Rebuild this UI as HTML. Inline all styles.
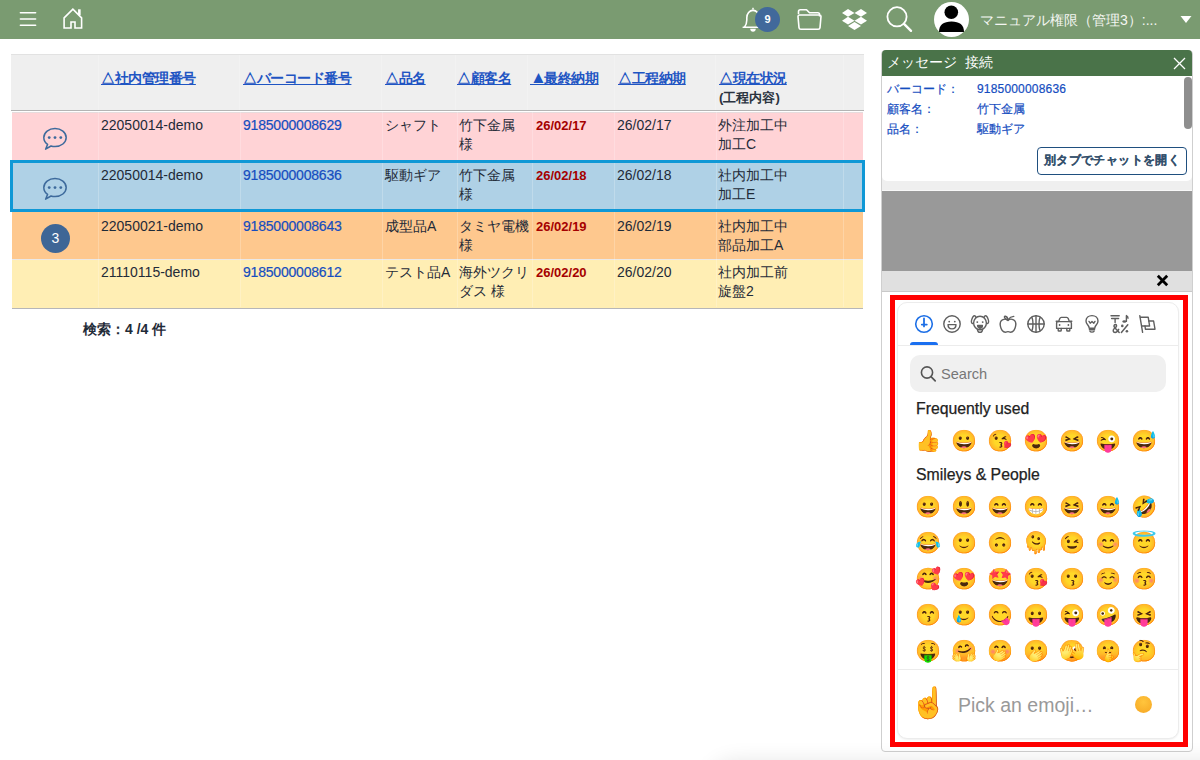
<!DOCTYPE html>
<html><head><meta charset="utf-8">
<style>
*{box-sizing:border-box;margin:0;padding:0}
html,body{width:1200px;height:760px;overflow:hidden;background:#fff;font-family:"Liberation Sans",sans-serif;color:#1f2b38}
.abs{position:absolute}
#hdr{position:absolute;left:0;top:0;width:1200px;height:39px;background:#7a9b71}
.t{position:absolute;white-space:nowrap;font-size:14px;line-height:19px}
.lk{color:#1f55c3;text-decoration:underline;font-weight:bold;font-size:14px;letter-spacing:-0.45px}
.bl{color:#154dbf;letter-spacing:-0.2px;-webkit-text-stroke:0.2px #154dbf}
.rd{color:#a50000;font-weight:bold}
.vs{position:absolute;width:1px;background:rgba(255,255,255,0.22)}
.row{position:absolute;left:12px;width:851px}
.emo{position:absolute;font-size:21px;line-height:24px;width:30px;text-align:center;filter:hue-rotate(-9deg) saturate(1.1)}
.ti{position:absolute;top:315px}
</style></head><body>
<!-- header -->
<div id="hdr">
  <svg class="abs" style="left:18px;top:9.5px" width="20" height="18" viewBox="0 0 20 18">
    <path d="M2.4 2.75H17.6M2.4 9H17.6M2.4 15.25H17.6" stroke="#fff" stroke-width="1.6" stroke-linecap="round"/>
  </svg>
  <svg class="abs" style="left:62px;top:6px" width="24" height="26" viewBox="0 0 24 26">
    <path d="M2.1 22V11.9L10.9 3.1L19.6 11.9V22H13V16H9V22Z" fill="none" stroke="#fff" stroke-width="1.6" stroke-linejoin="miter"/>
    <path d="M17.35 3.3V9.2" stroke="#fff" stroke-width="2.6"/>
  </svg>
  <!-- bell -->
  <svg class="abs" style="left:740px;top:6px" width="26" height="28" viewBox="0 0 26 28">
    <path d="M4.4 21.2C6 19.4 6.8 17 6.8 14V11.8C6.8 7.8 9.5 4.4 13 4.4C16.5 4.4 19.2 7.8 19.2 11.8V14C19.2 17 20 19.4 21.6 21.2ZM3.2 21.2H22.8" fill="none" stroke="#fff" stroke-width="1.6" stroke-linecap="round" stroke-linejoin="round"/><path d="M11.6 3.6L13 1.2L14.4 3.6Z" fill="#fff"/><path d="M10.2 22.8H15.8C15.8 24.6 14.6 25.8 13 25.8C11.4 25.8 10.2 24.6 10.2 22.8Z" fill="#fff"/>
  </svg>
  <div class="abs" style="left:755px;top:7px;width:25px;height:25px;border-radius:50%;background:#41699b;color:#fff;font-weight:bold;font-size:11px;line-height:25px;text-align:center">9</div>
  <!-- folder -->
  <svg class="abs" style="left:796px;top:8px" width="27" height="23" viewBox="0 0 27 23">
    <path d="M2.5 6V3.5C2.5 2.4 3.2 1.8 4.3 1.8H10.5L13.5 4.8H21.8C23 4.8 23.6 5.5 23.6 6.6V8.5M2 8.5C2 7.7 2.7 7 3.5 7H23.5C24.3 7 25 7.7 25 8.5L24 19.6C23.9 20.6 23.2 21.2 22.2 21.2H4.8C3.8 21.2 3.1 20.6 3 19.6Z" fill="none" stroke="#fff" stroke-width="1.6" stroke-linejoin="round"/>
  </svg>
  <!-- dropbox -->
  <svg class="abs" style="left:841px;top:8px" width="27" height="24" viewBox="0 0 27 24">
    <path fill="#fff" d="M7 1L1 4.9L7 8.8L13.5 4.9ZM20 1L13.5 4.9L20 8.8L26 4.9ZM1 12.7L7 16.6L13.5 12.7L7 8.8ZM20 8.8L13.5 12.7L20 16.6L26 12.7ZM7 18L13.5 22L20 18L13.5 14.1Z"/>
  </svg>
  <!-- search -->
  <svg class="abs" style="left:885px;top:4.5px" width="30" height="29" viewBox="0 0 30 29">
    <circle cx="12" cy="11.8" r="9.6" fill="none" stroke="#fff" stroke-width="1.8"/>
    <path d="M19 18.8L26 25.8" stroke="#fff" stroke-width="2.4" stroke-linecap="round"/>
  </svg>
  <!-- avatar -->
  <svg class="abs" style="left:934px;top:2px" width="35" height="35" viewBox="0 0 35 35">
    <circle cx="17.5" cy="17.5" r="17.5" fill="#fff"/>
    <circle cx="17.3" cy="10.2" r="6.8" fill="#000"/>
    <path d="M5 30C5 23 9.5 19.6 17.5 19.6C25.5 19.6 30 23 30 30Z" fill="#000"/>
  </svg>
  <div class="t" style="left:980px;top:10px;font-size:14px;line-height:20px;color:#f4f6f2">マニュアル権限（管理3）:...</div>
  <svg class="abs" style="left:1180px;top:15px" width="12" height="9" viewBox="0 0 12 9"><path d="M0.5 1H11.5L6 8Z" fill="#fff"/></svg>
</div>

<!-- table header -->
<div class="abs" style="left:11px;top:54px;width:853px;height:56px;background:#efefef;border-top:1px solid #e2e2e2"></div>
<div class="abs" style="left:11px;top:110px;width:853px;height:1px;background:#b4b4b4"></div>
<div class="vs" style="left:98px;top:55px;height:55px"></div>
<div class="vs" style="left:239px;top:55px;height:55px"></div>
<div class="vs" style="left:381px;top:55px;height:55px"></div>
<div class="vs" style="left:455px;top:55px;height:55px"></div>
<div class="vs" style="left:527px;top:55px;height:55px"></div>
<div class="vs" style="left:614px;top:55px;height:55px"></div>
<div class="vs" style="left:715px;top:55px;height:55px"></div>
<div class="vs" style="left:843px;top:55px;height:55px"></div>
<div class="t lk" style="left:101px;top:69px">△社内管理番号</div>
<div class="t lk" style="left:243px;top:69px">△バーコード番号</div>
<div class="t lk" style="left:385px;top:69px">△品名</div>
<div class="t lk" style="left:457px;top:69px">△顧客名</div>
<div class="t lk" style="left:530px;top:69px"><span style="font-size:17px;line-height:0;margin-left:0px;margin-right:-2px">▲</span>最終納期</div>
<div class="t lk" style="left:618px;top:69px">△工程納期</div>
<div class="t lk" style="left:719px;top:69px">△現在状況</div>
<div class="t" style="left:719px;top:88px;font-weight:bold;font-size:13.2px;color:#2b3440">(工程内容)</div>

<!-- rows -->
<div class="row" style="top:112px;height:48px;background:#ffd3d6;border-top:1px solid #e6dcdd"></div>
<div class="row" style="top:160px;height:52px;background:#afd1e6;left:10px;width:855px"></div>
<div class="row" style="top:212px;height:47px;background:#fec88e"></div>
<div class="row" style="top:259px;height:49px;background:#ffeeb4;border-top:1px solid #ebe8e6"></div>
<div class="abs" style="left:12px;top:308px;width:851px;height:1px;background:#b6b6b9"></div>
<div class="vs" style="left:98px;top:112px;height:195px"></div>
<div class="vs" style="left:240px;top:112px;height:195px"></div>
<div class="vs" style="left:382px;top:112px;height:195px"></div>
<div class="vs" style="left:457px;top:112px;height:195px"></div>
<div class="vs" style="left:532px;top:112px;height:195px"></div>
<div class="vs" style="left:614px;top:112px;height:195px"></div>
<div class="vs" style="left:716px;top:112px;height:195px"></div>
<div class="vs" style="left:843px;top:112px;height:195px"></div>
<div class="abs" style="top:160px;height:52px;left:10px;width:855px;border:3px solid #0f98d6"></div>

<!-- chat icons -->
<svg class="abs" style="left:42px;top:127px" width="26" height="24" viewBox="0 0 26 24">
  <path d="M3.6 22.2L5.6 17.4C3.2 15.8 1.8 13.4 1.8 10.6C1.8 5.5 6.9 1.5 13 1.5C19.1 1.5 24.2 5.5 24.2 10.6C24.2 15.7 19.1 19.6 13 19.6C11.6 19.6 10.2 19.4 9 19Z" fill="none" stroke="#3d6a9c" stroke-width="1.5" stroke-linejoin="round"/>
  <circle cx="7.2" cy="10.6" r="1.4" fill="#3d6a9c"/><circle cx="13" cy="10.6" r="1.4" fill="#3d6a9c"/><circle cx="18.8" cy="10.6" r="1.4" fill="#3d6a9c"/>
</svg>
<svg class="abs" style="left:42px;top:177px" width="26" height="24" viewBox="0 0 26 24">
  <path d="M3.6 22.2L5.6 17.4C3.2 15.8 1.8 13.4 1.8 10.6C1.8 5.5 6.9 1.5 13 1.5C19.1 1.5 24.2 5.5 24.2 10.6C24.2 15.7 19.1 19.6 13 19.6C11.6 19.6 10.2 19.4 9 19Z" fill="none" stroke="#3d6a9c" stroke-width="1.5" stroke-linejoin="round"/>
  <circle cx="7.2" cy="10.6" r="1.4" fill="#3d6a9c"/><circle cx="13" cy="10.6" r="1.4" fill="#3d6a9c"/><circle cx="18.8" cy="10.6" r="1.4" fill="#3d6a9c"/>
</svg>
<div class="abs" style="left:41px;top:224px;width:29px;height:29px;border-radius:50%;background:#3e6696;color:#fff;font-size:14px;line-height:29px;text-align:center">3</div>

<!-- row 1 -->
<div class="t" style="left:101px;top:116px">22050014-demo</div>
<div class="t bl" style="left:243px;top:116px">9185000008629</div>
<div class="t" style="left:385px;top:116px">シャフト</div>
<div class="t" style="left:459px;top:116px">竹下金属<br>様</div>
<div class="t rd" style="left:536px;top:116px;font-size:13px">26/02/17</div>
<div class="t" style="left:617px;top:116px">26/02/17</div>
<div class="t" style="left:718px;top:116px">外注加工中<br>加工C</div>
<!-- row 2 -->
<div class="t" style="left:101px;top:166px">22050014-demo</div>
<div class="t bl" style="left:243px;top:166px">9185000008636</div>
<div class="t" style="left:385px;top:166px">駆動ギア</div>
<div class="t" style="left:459px;top:166px">竹下金属<br>様</div>
<div class="t rd" style="left:536px;top:166px;font-size:13px">26/02/18</div>
<div class="t" style="left:617px;top:166px">26/02/18</div>
<div class="t" style="left:718px;top:166px">社内加工中<br>加工E</div>
<!-- row 3 -->
<div class="t" style="left:101px;top:217px">22050021-demo</div>
<div class="t bl" style="left:243px;top:217px">9185000008643</div>
<div class="t" style="left:385px;top:217px">成型品A</div>
<div class="t" style="left:459px;top:217px">タミヤ電機<br>様</div>
<div class="t rd" style="left:536px;top:217px;font-size:13px">26/02/19</div>
<div class="t" style="left:617px;top:217px">26/02/19</div>
<div class="t" style="left:718px;top:217px">社内加工中<br>部品加工A</div>
<!-- row 4 -->
<div class="t" style="left:101px;top:263px">21110115-demo</div>
<div class="t bl" style="left:243px;top:263px">9185000008612</div>
<div class="t" style="left:385px;top:263px">テスト品A</div>
<div class="t" style="left:459px;top:263px">海外ツクリ<br>ダス 様</div>
<div class="t rd" style="left:536px;top:263px;font-size:13px">26/02/20</div>
<div class="t" style="left:617px;top:263px">26/02/20</div>
<div class="t" style="left:718px;top:263px">社内加工前<br>旋盤2</div>

<div class="t" style="left:83px;top:320px;font-weight:bold;color:#1f2b38">検索：4 /4 件</div>

<!-- message panel -->
<div class="abs" style="left:881px;top:50px;width:312px;height:702px;border:1px solid #cfcfcf;border-radius:4px;background:#fff"></div>
<div class="abs" style="left:882px;top:50px;width:310px;height:26px;background:#4a7349;border-radius:4px 4px 0 0"></div>
<div class="t" style="left:887px;top:51px;font-size:14px;line-height:22px;color:#fff">メッセージ&nbsp;&nbsp;接続</div>
<svg class="abs" style="left:1173px;top:57px" width="13" height="13" viewBox="0 0 13 13"><path d="M1 1L12 12M12 1L1 12" stroke="#fff" stroke-width="1.3"/></svg>
<div class="abs" style="left:1184px;top:77px;width:8px;height:52px;border-radius:4px;background:#8e8e8e"></div>
<div class="t bl" style="left:887px;top:79px;font-size:12px;line-height:20px;letter-spacing:0">バーコード：<br>顧客名：<br>品名：</div>
<div class="t bl" style="left:977px;top:79px;font-size:12px;line-height:20px;letter-spacing:0"><span style="letter-spacing:0.18px">9185000008636</span><br>竹下金属<br>駆動ギア</div>
<div class="abs" style="left:882px;top:176px;width:310px;height:14px;background:#efefef"></div>
<div class="abs" style="left:882px;top:176px;width:310px;height:5px;background:#fff;border-radius:0 0 5px 5px"></div>
<div class="abs" style="left:882px;top:190px;width:310px;height:1px;background:#f8f8f8"></div>
<div class="abs" style="left:1037px;top:147px;width:150px;height:28px;border:1px solid #1f4f7f;border-radius:4px;background:#fff;color:#34506c;font-weight:bold;font-size:12px;line-height:24px;letter-spacing:0.35px;-webkit-text-stroke:0.12px #34506c;text-align:center">別タブでチャットを開く</div>

<div class="abs" style="left:882px;top:191px;width:310px;height:80px;background:#999"></div>
<div class="abs" style="left:882px;top:271px;width:310px;height:21px;background:#e0e0e0;border-bottom:1px solid #c9c9c9"></div>
<svg class="abs" style="left:1156px;top:274px" width="13" height="13" viewBox="0 0 13 13"><path d="M1.8 1.8L11.2 11.2M11.2 1.8L1.8 11.2" stroke="#000" stroke-width="2.8"/></svg>

<!-- emoji picker -->
<div class="abs" style="left:889.5px;top:294.5px;width:298.5px;height:452px;border:5px solid #f00"></div>
<div class="abs" style="left:897px;top:302px;width:282px;height:437px;border:1px solid #ececec;border-radius:10px;background:#fff;box-shadow:0 1px 2px rgba(0,0,0,0.06)"></div>
<div class="abs" style="left:910px;top:342px;width:28px;height:3px;border-radius:3px 3px 0 0;background:#1a6ff0"></div>
<div class="abs" style="left:898px;top:345px;width:280px;height:1px;background:#ececec"></div>
<div id="tabs"><svg class="abs" style="left:914.0px;top:314.0px" width="20" height="20" viewBox="0 0 20 20" fill="none" stroke="#1d6fe6" stroke-width="1.4" stroke-linecap="round" stroke-linejoin="round"><circle cx="10" cy="10" r="8.3" stroke-width="1.6"/><path d="M10 4.4V12.4M7.8 10.6H12.8" stroke-width="1.8"/></svg><svg class="abs" style="left:942.0px;top:314.0px" width="20" height="20" viewBox="0 0 20 20" fill="none" stroke="#5f5f5f" stroke-width="1.4" stroke-linecap="round" stroke-linejoin="round"><circle cx="10" cy="10" r="8.2"/><circle cx="7.2" cy="7.6" r="0.9" fill="#5f5f5f" stroke="none"/><circle cx="12.8" cy="7.6" r="0.9" fill="#5f5f5f" stroke="none"/><path d="M6 10.6H14C14 13.2 12.2 14.9 10 14.9C7.8 14.9 6 13.2 6 10.6Z"/></svg><svg class="abs" style="left:970.0px;top:314.0px" width="20" height="20" viewBox="0 0 20 20" fill="none" stroke="#5f5f5f" stroke-width="1.4" stroke-linecap="round" stroke-linejoin="round"><ellipse cx="3.7" cy="5.7" rx="1.9" ry="4" transform="rotate(18 3.7 5.7)"/><ellipse cx="16.3" cy="5.7" rx="1.9" ry="4" transform="rotate(-18 16.3 5.7)"/><ellipse cx="10" cy="9" rx="6.4" ry="6.8" fill="#fff"/><circle cx="7.3" cy="8.1" r="0.95" fill="#5f5f5f" stroke="none"/><circle cx="12.7" cy="8.1" r="0.95" fill="#5f5f5f" stroke="none"/><path d="M7.6 11.5H12.4C12.4 12.9 11.3 14 10 14C8.7 14 7.6 12.9 7.6 11.5Z" fill="#5f5f5f"/><path d="M10 14V15.6M7.4 15.4C7.6 17.4 8.6 18.4 10 18.4C11.4 18.4 12.4 17.4 12.6 15.4"/></svg><svg class="abs" style="left:998.0px;top:314.0px" width="20" height="20" viewBox="0 0 20 20" fill="none" stroke="#5f5f5f" stroke-width="1.4" stroke-linecap="round" stroke-linejoin="round"><path d="M10 6.4C8.6 5.2 6.6 4.9 5 5.6C2.6 6.6 1.8 9.4 2.4 12.2C3 15.2 5 18.2 7.4 18.2C8.4 18.2 9.2 17.6 10 17.6C10.8 17.6 11.6 18.2 12.6 18.2C15 18.2 17 15.2 17.6 12.2C18.2 9.4 17.4 6.6 15 5.6C13.4 4.9 11.4 5.2 10 6.4Z"/><path d="M10 6.2C9.8 4.2 8.8 2.4 7.4 2.2C6.2 2.1 6 3.4 7.2 4.4C8.1 5.2 9 5.8 10 6.2Z"/><path d="M10.4 5.4C11.6 3.6 13.6 2.6 15.8 2.4"/></svg><svg class="abs" style="left:1026.0px;top:314.0px" width="20" height="20" viewBox="0 0 20 20" fill="none" stroke="#5f5f5f" stroke-width="1.4" stroke-linecap="round" stroke-linejoin="round"><circle cx="10" cy="10" r="8.2"/><path d="M10 1.8V18.2M1.8 10H18.2M5.6 3.2C7.4 5.2 7.4 14.8 5.6 16.8M14.4 3.2C12.6 5.2 12.6 14.8 14.4 16.8"/></svg><svg class="abs" style="left:1054.0px;top:314.0px" width="20" height="20" viewBox="0 0 20 20" fill="none" stroke="#5f5f5f" stroke-width="1.4" stroke-linecap="round" stroke-linejoin="round"><path d="M4.6 7.6L5.8 4.6C6.1 3.8 6.6 3.4 7.4 3.4H12.6C13.4 3.4 13.9 3.8 14.2 4.6L15.4 7.6"/><path d="M2.6 9.2C2.6 8.3 3.3 7.6 4.2 7.6H15.8C16.7 7.6 17.4 8.3 17.4 9.2V14.4H2.6Z"/><path d="M2.2 7.2H3.6M16.4 7.2H17.8"/><path d="M4.2 14.4V16.4C4.2 16.8 4.5 17 4.9 17H6.5C6.9 17 7.2 16.8 7.2 16.4V14.4M12.8 14.4V16.4C12.8 16.8 13.1 17 13.5 17H15.1C15.5 17 15.8 16.8 15.8 16.4V14.4"/><circle cx="5.6" cy="11" r="0.9" fill="#5f5f5f" stroke="none"/><circle cx="14.4" cy="11" r="0.9" fill="#5f5f5f" stroke="none"/></svg><svg class="abs" style="left:1082.0px;top:314.0px" width="20" height="20" viewBox="0 0 20 20" fill="none" stroke="#5f5f5f" stroke-width="1.4" stroke-linecap="round" stroke-linejoin="round"><path d="M7.2 14.2C7.2 12.6 6.6 12 5.6 10.8C4.6 9.6 4 8.4 4 7C4 3.8 6.7 1.6 10 1.6C13.3 1.6 16 3.8 16 7C16 8.4 15.4 9.6 14.4 10.8C13.4 12 12.8 12.6 12.8 14.2Z"/><path d="M7.4 15.8H12.6M8 17.4C8.6 18.4 11.4 18.4 12 17.4"/><path d="M7 7.4L8.2 9.2L10 7.6L11.8 9.2L13 7.4"/></svg><svg class="abs" style="left:1110.0px;top:314.0px" width="20" height="20" viewBox="0 0 20 20" fill="none" stroke="#5f5f5f" stroke-width="1.4" stroke-linecap="round" stroke-linejoin="round"><path d="M1 1.7H9.2M1.6 4.5H8.6M5.1 4.5V8.6" stroke-width="1.4"/><path d="M16.4 1.6V7.4M16.4 1.6C17.4 2.2 18.2 2.8 18 4.2"/><ellipse cx="14.4" cy="7.5" rx="2" ry="1.3" fill="#5f5f5f" stroke="none"/><path d="M9.2 18.4L4.6 13.4C3.6 12.2 3.9 10.6 5.3 10.6C6.7 10.6 6.9 12.1 5.9 13.1L4.1 14.7C2.7 16 2.9 18.4 5.1 18.4C6.6 18.4 7.8 17.2 8.7 15.4" stroke-width="1.5"/><path d="M17.8 10.8L11.4 18.4" stroke-width="1.5"/><circle cx="12.3" cy="11.9" r="1.3" fill="#5f5f5f" stroke="none"/><circle cx="16.9" cy="17.3" r="1.3" fill="#5f5f5f" stroke="none"/></svg><svg class="abs" style="left:1138.0px;top:314.0px" width="20" height="20" viewBox="0 0 20 20" fill="none" stroke="#5f5f5f" stroke-width="1.4" stroke-linecap="round" stroke-linejoin="round"><path d="M1.8 1.6L4.6 18.4"/><path d="M2.4 3.2H10.2L11.6 12H3.8"/><path d="M10.8 7H15.6L17 15.2H7.4L7 12"/></svg></div>
<div class="abs" style="left:910px;top:355px;width:256px;height:37px;border-radius:10px;background:#f0f0f0"></div>
<svg class="abs" style="left:920px;top:365px" width="17" height="18" viewBox="0 0 17 18"><circle cx="7" cy="7.5" r="5.6" fill="none" stroke="#555" stroke-width="1.6"/><path d="M11 11.6L15.2 15.8" stroke="#555" stroke-width="1.7" stroke-linecap="round"/></svg>
<div class="t" style="left:941px;top:364px;font-size:14.6px;line-height:20px;color:#777">Search</div>
<div class="t" style="left:916px;top:399px;font-size:15.8px;line-height:20px;color:#222;-webkit-text-stroke:0.25px #222">Frequently used</div>
<div class="t" style="left:916px;top:465px;font-size:15.8px;line-height:20px;color:#222;-webkit-text-stroke:0.25px #222">Smileys &amp; People</div>
<div id="emojis"><div class="emo" style="left:913px;top:429px">👍</div><div class="emo" style="left:949px;top:429px">😀</div><div class="emo" style="left:985px;top:429px">😘</div><div class="emo" style="left:1021px;top:429px">😍</div><div class="emo" style="left:1057px;top:429px">😆</div><div class="emo" style="left:1093px;top:429px">😜</div><div class="emo" style="left:1129px;top:429px">😅</div><div class="emo" style="left:913px;top:495px">😀</div><div class="emo" style="left:949px;top:495px">😃</div><div class="emo" style="left:985px;top:495px">😄</div><div class="emo" style="left:1021px;top:495px">😁</div><div class="emo" style="left:1057px;top:495px">😆</div><div class="emo" style="left:1093px;top:495px">😅</div><div class="emo" style="left:1129px;top:495px">🤣</div><div class="emo" style="left:913px;top:531px">😂</div><div class="emo" style="left:949px;top:531px">🙂</div><div class="emo" style="left:985px;top:531px">🙃</div><div class="emo" style="left:1021px;top:531px">🫠</div><div class="emo" style="left:1057px;top:531px">😉</div><div class="emo" style="left:1093px;top:531px">😊</div><div class="emo" style="left:1129px;top:531px">😇</div><div class="emo" style="left:913px;top:567px">🥰</div><div class="emo" style="left:949px;top:567px">😍</div><div class="emo" style="left:985px;top:567px">🤩</div><div class="emo" style="left:1021px;top:567px">😘</div><div class="emo" style="left:1057px;top:567px">😗</div><div class="emo" style="left:1093px;top:567px">☺️</div><div class="emo" style="left:1129px;top:567px">😚</div><div class="emo" style="left:913px;top:603px">😙</div><div class="emo" style="left:949px;top:603px">🥲</div><div class="emo" style="left:985px;top:603px">😋</div><div class="emo" style="left:1021px;top:603px">😛</div><div class="emo" style="left:1057px;top:603px">😜</div><div class="emo" style="left:1093px;top:603px">🤪</div><div class="emo" style="left:1129px;top:603px">😝</div><div class="emo" style="left:913px;top:639px">🤑</div><div class="emo" style="left:949px;top:639px">🤗</div><div class="emo" style="left:985px;top:639px">🤭</div><div class="emo" style="left:1021px;top:639px">🫢</div><div class="emo" style="left:1057px;top:639px">🫣</div><div class="emo" style="left:1093px;top:639px">🤫</div><div class="emo" style="left:1129px;top:639px">🤔</div></div>
<div class="abs" style="left:898px;top:669px;width:280px;height:1px;background:#ececec"></div>
<div class="emo" style="left:908px;top:686px;font-size:30px;line-height:34px;width:40px">☝️</div>
<div class="t" style="left:958px;top:693px;font-size:19.5px;line-height:24px;color:#999">Pick an emoji…</div>
<div class="abs" style="left:1135px;top:696px;width:17px;height:17px;border-radius:50%;background:radial-gradient(circle at 50% 35%,#ffc53d,#f6a623)"></div>

<!-- bottom shadow -->
<div class="abs" style="left:715px;top:768px;width:600px;height:40px;border-radius:40px;box-shadow:0 0 22px 6px rgba(0,0,0,0.11)"></div>
</body></html>
